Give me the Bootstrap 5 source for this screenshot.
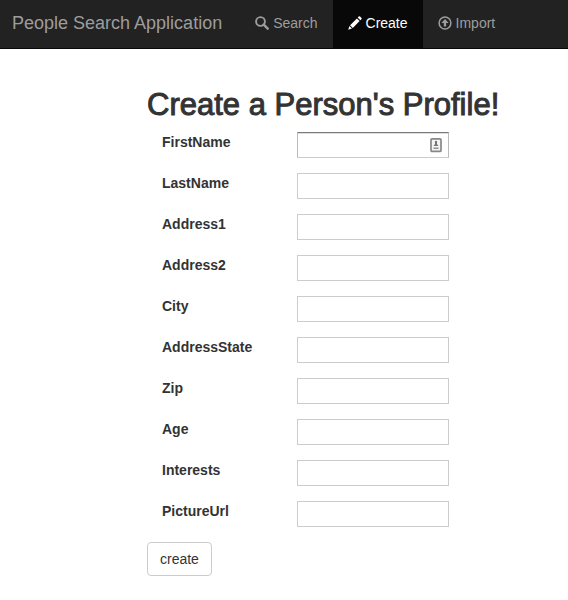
<!DOCTYPE html>
<html lang="en">
<head>
<meta charset="utf-8">
<meta name="viewport" content="width=device-width, initial-scale=1">
<title>People Search Application</title>
<link href="https://cdn.jsdelivr.net/npm/bootstrap@5.3.0/dist/css/bootstrap.min.css" rel="stylesheet">
<style>
body { font-family: "Liberation Sans", Arial, sans-serif; font-size: 14px; line-height: 20px; color: #333; background: #fff; }
.top-bar { background: #222; border-bottom: 1px solid #080808; padding: 0 12px; min-height: 49px; }
.top-bar .navbar-brand { color: #9d9d9d; font-size: 18px; line-height: 20px; padding: 13px 0 15px; margin-right: 18px; }
.top-bar .navbar-nav .nav-link { color: #9d9d9d; padding: 13px 15px 15px; gap: 4px; }
.top-bar .navbar-nav .nav-link.active { color: #fff; background: #080808; }
.nav-icon { width: 14px; height: 14px; fill: currentColor; }
.page-area { padding: 39px 10px 24px; }
.page-title { font-size: 31px; line-height: 33px; font-weight: 500; margin-bottom: 11px; white-space: nowrap; -webkit-text-stroke: 1px #333; }
.field-row { margin-bottom: 15px; }
.field-label { width: 150px; padding-left: 15px; font-weight: 700; line-height: 20px; }
.field-box { width: 152px; height: 26px; border: 1px solid #ccc; border-radius: 0; padding: 2px; color: #333; background: #fff; }
.field-box-first { border-color: #7a7a7a #bbb #ccc; box-shadow: inset 0 1px 0 #ddd; }
.autofill-icon { right: 6px; top: 5px; width: 14px; height: 16px; }
.btn-create { font-size: 14px; line-height: 20px; padding: 6px 12px; border: 1px solid #ccc; border-radius: 4px; color: #333; background: #fff; }
</style>
<script src="https://cdn.jsdelivr.net/npm/bootstrap@5.3.0/dist/js/bootstrap.bundle.min.js"></script>
</head>
<body>
<nav class="top-bar navbar navbar-expand align-items-stretch justify-content-start">
  <a class="navbar-brand" href="#">People Search Application</a>
  <ul class="navbar-nav">
    <li class="nav-item d-flex"><a class="nav-link d-flex align-items-center" href="#search">
      <svg class="nav-icon" viewBox="0 0 14 14" aria-hidden="true"><circle cx="5.5" cy="5.5" r="4.4" fill="none" stroke="currentColor" stroke-width="1.9"/><path d="M8.7 8.7l4 4" stroke="currentColor" stroke-width="2.4" stroke-linecap="round"/></svg>Search</a></li>
    <li class="nav-item d-flex"><a class="nav-link active d-flex align-items-center" aria-current="page" href="#create">
      <svg class="nav-icon" viewBox="0 0 14 14" aria-hidden="true"><path d="M.2 13.8l1.2-3.8 2.6 2.6zM2.1 9.2l6.8-6.8 2.7 2.7-6.8 6.8zM9.7 1.6l1-1q.7-.7 1.4 0l1.3 1.3q.7.7 0 1.4l-1 1z"/></svg>Create</a></li>
    <li class="nav-item d-flex"><a class="nav-link d-flex align-items-center" href="#import">
      <svg class="nav-icon" viewBox="0 0 14 14" aria-hidden="true"><circle cx="7" cy="7" r="5.9" fill="none" stroke="currentColor" stroke-width="1.5"/><path d="M7 3l3.7 4H8.2v3.5H5.8V7H3.3z"/></svg>Import</a></li>
  </ul>
</nav>
<main class="container-fluid page-area">
  <div class="row g-0">
    <div class="col-9 offset-3">
      <h1 class="page-title">Create a Person's Profile!</h1>
      <form>
        <div class="d-flex field-row"><label class="field-label" for="firstName">FirstName</label>
          <div class="position-relative"><input class="field-box field-box-first d-block" type="text" id="firstName">
            <svg class="autofill-icon position-absolute pe-none" viewBox="0 0 14 16" aria-hidden="true"><rect x="2" y="1.8" width="10" height="12.6" rx="1" fill="#f4f4f4" stroke="#888" stroke-width="1.7"/><circle cx="7" cy="5" r="1.2" fill="#777"/><path d="M6 5h2v2l1.5 2h-5L6 7z" fill="#777"/><path d="M4.5 11.2h5" stroke="#888" stroke-width="1.4"/></svg>
          </div></div>
        <div class="d-flex field-row"><label class="field-label" for="lastName">LastName</label><input class="field-box" type="text" id="lastName"></div>
        <div class="d-flex field-row"><label class="field-label" for="address1">Address1</label><input class="field-box" type="text" id="address1"></div>
        <div class="d-flex field-row"><label class="field-label" for="address2">Address2</label><input class="field-box" type="text" id="address2"></div>
        <div class="d-flex field-row"><label class="field-label" for="city">City</label><input class="field-box" type="text" id="city"></div>
        <div class="d-flex field-row"><label class="field-label" for="addressState">AddressState</label><input class="field-box" type="text" id="addressState"></div>
        <div class="d-flex field-row"><label class="field-label" for="zip">Zip</label><input class="field-box" type="text" id="zip"></div>
        <div class="d-flex field-row"><label class="field-label" for="age">Age</label><input class="field-box" type="text" id="age"></div>
        <div class="d-flex field-row"><label class="field-label" for="interests">Interests</label><input class="field-box" type="text" id="interests"></div>
        <div class="d-flex field-row"><label class="field-label" for="pictureUrl">PictureUrl</label><input class="field-box" type="text" id="pictureUrl"></div>
        <button class="btn btn-create" type="submit">create</button>
      </form>
    </div>
  </div>
</main>
</body>
</html>
